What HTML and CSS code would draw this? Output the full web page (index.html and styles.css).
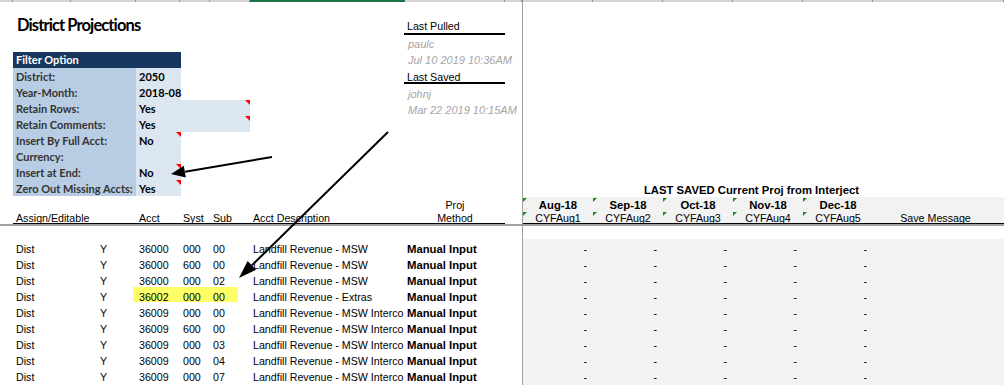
FILE: index.html
```html
<!DOCTYPE html>
<html lang="en">
<head>
<meta charset="utf-8">
<title>District Projections</title>
<link rel="stylesheet" href="styles.css">
</head>
<body>
<div class="sheet">
  <div class="colbar">
    <span></span><span></span><span></span><span></span><span></span><span></span>
    <span class="sel"></span><span></span><span></span><span></span>
    <span></span><span></span><span></span><span></span><span></span><span></span>
  </div>

  <div class="panes">
    <!-- frozen top-left: title, filter block, pull/save info, column headings -->
    <section class="tl">
      <h1 class="title">District Projections</h1>

      <div class="filter">
        <div class="fhead">Filter Option</div>
        <div class="flabel">District:</div><div class="fval">2050</div>
        <div class="flabel">Year-Month:</div><div class="fval">2018-08</div>
        <div class="flabel">Retain Rows:</div><div class="fval wide note">Yes</div>
        <div class="flabel">Retain Comments:</div><div class="fval wide note">Yes</div>
        <div class="flabel">Insert By Full Acct:</div><div class="fval note">No</div>
        <div class="flabel">Currency:</div><div class="fval"></div>
        <div class="flabel">Insert at End:</div><div class="fval note">No</div>
        <div class="flabel">Zero Out Missing Accts:</div><div class="fval note">Yes</div>
      </div>

      <div class="stamp">
        <div class="st-head">Last Pulled</div>
        <div class="st-val p1">paulc</div>
        <div class="st-val p0">Jul 10 2019 10:36AM</div>
        <div class="st-head second">Last Saved</div>
        <div class="st-val p2">johnj</div>
        <div class="st-val p2">Mar 22 2019 10:15AM</div>
      </div>

      <div class="colheads">
        <span class="c-proj">Proj</span>
        <span>Assign/Editable</span>
        <span></span>
        <span>Acct</span>
        <span>Syst</span>
        <span>Sub</span>
        <span>Acct Description</span>
        <span class="c-method">Method</span>
      </div>
    </section>

    <div class="vsplit"></div>

    <!-- frozen top-right: saved projection headings -->
    <section class="tr">
      <div class="saved-title">LAST SAVED Current Proj from Interject</div>
      <div class="mhead">
        <span class="flag mon">Aug-18</span>
        <span class="flag mon">Sep-18</span>
        <span class="flag mon">Oct-18</span>
        <span class="flag mon">Nov-18</span>
        <span class="flag mon">Dec-18</span>
        <span></span>
        <span class="flag key">CYFAug1</span>
        <span class="flag key">CYFAug2</span>
        <span class="flag key">CYFAug3</span>
        <span class="flag key">CYFAug4</span>
        <span class="flag key">CYFAug5</span>
        <span class="key msg">Save Message</span>
      </div>
    </section>

    <div class="hsplit"></div>

    <!-- account rows -->
    <section class="bl">
      <div class="drow"><span>Dist</span><span class="ctr">Y</span><span>36000</span><span>000</span><span>00</span><span class="desc">Landfill Revenue - MSW</span><span class="meth">Manual Input</span><span></span></div>
      <div class="drow"><span>Dist</span><span class="ctr">Y</span><span>36000</span><span>600</span><span>00</span><span class="desc">Landfill Revenue - MSW</span><span class="meth">Manual Input</span><span></span></div>
      <div class="drow"><span>Dist</span><span class="ctr">Y</span><span>36000</span><span>000</span><span>02</span><span class="desc">Landfill Revenue - MSW</span><span class="meth">Manual Input</span><span></span></div>
      <div class="drow hl"><i class="mark"></i><span>Dist</span><span class="ctr">Y</span><span>36002</span><span>000</span><span>00</span><span class="desc">Landfill Revenue - Extras</span><span class="meth">Manual Input</span><span></span></div>
      <div class="drow"><span>Dist</span><span class="ctr">Y</span><span>36009</span><span>000</span><span>00</span><span class="desc">Landfill Revenue - MSW Interco</span><span class="meth">Manual Input</span><span></span></div>
      <div class="drow"><span>Dist</span><span class="ctr">Y</span><span>36009</span><span>600</span><span>00</span><span class="desc">Landfill Revenue - MSW Interco</span><span class="meth">Manual Input</span><span></span></div>
      <div class="drow"><span>Dist</span><span class="ctr">Y</span><span>36009</span><span>000</span><span>03</span><span class="desc">Landfill Revenue - MSW Interco</span><span class="meth">Manual Input</span><span></span></div>
      <div class="drow"><span>Dist</span><span class="ctr">Y</span><span>36009</span><span>000</span><span>04</span><span class="desc">Landfill Revenue - MSW Interco</span><span class="meth">Manual Input</span><span></span></div>
      <div class="drow"><span>Dist</span><span class="ctr">Y</span><span>36009</span><span>000</span><span>07</span><span class="desc">Landfill Revenue - MSW Interco</span><span class="meth">Manual Input</span><span></span></div>
    </section>

    <section class="br">
      <div class="vals">
        <div class="vrow"><span>-</span><span>-</span><span>-</span><span>-</span><span>-</span><span></span></div>
        <div class="vrow"><span>-</span><span>-</span><span>-</span><span>-</span><span>-</span><span></span></div>
        <div class="vrow"><span>-</span><span>-</span><span>-</span><span>-</span><span>-</span><span></span></div>
        <div class="vrow"><span>-</span><span>-</span><span>-</span><span>-</span><span>-</span><span></span></div>
        <div class="vrow"><span>-</span><span>-</span><span>-</span><span>-</span><span>-</span><span></span></div>
        <div class="vrow"><span>-</span><span>-</span><span>-</span><span>-</span><span>-</span><span></span></div>
        <div class="vrow"><span>-</span><span>-</span><span>-</span><span>-</span><span>-</span><span></span></div>
        <div class="vrow"><span>-</span><span>-</span><span>-</span><span>-</span><span>-</span><span></span></div>
        <div class="vrow"><span>-</span><span>-</span><span>-</span><span>-</span><span>-</span><span></span></div>
      </div>
    </section>
  </div>

  <!-- callout arrows drawn over the sheet -->
  <svg class="callouts" width="1004" height="385" viewBox="0 0 1004 385" aria-hidden="true">
    <line x1="272" y1="157" x2="185" y2="171.7" stroke="#000" stroke-width="2"/>
    <polygon points="171,174 185.8,177.6 183.8,165.8" fill="#000"/>
    <line x1="388" y1="132" x2="251.8" y2="265.4" stroke="#000" stroke-width="2"/>
    <polygon points="239,278 256,269.7 247.6,261.1" fill="#000"/>
  </svg>
</div>
</body>
</html>
```

FILE: styles.css
```css
:root {
  --lcols: 13px 58px 65px 44px 30px 40px 155px 100px 17px;
  --rcols: 70px 70px 70px 70px 70px 1fr;
  --toprows: 16px 17px 17px 16px repeat(8, 16px) 14px 14px;
}

* { box-sizing: border-box; }

body {
  margin: 0;
  background: #fff;
  font-family: "Liberation Sans", Arial, sans-serif;
  font-size: 10.67px;
  color: #000;
}

.sheet {
  position: relative;
  width: 1004px;
  height: 385px;
  overflow: hidden;
}

/* column header edge */
.colbar {
  display: grid;
  grid-template-columns: var(--lcols) 1px 70px 70px 70px 70px 70px 1fr;
  height: 2px;
  background: #d4d4d4;
}
.colbar span { border-right: 1px solid #979797; }
.colbar .sel { background: #217346; border-right: none; }

.panes {
  display: grid;
  grid-template-columns: 522px 1px 1fr;
  grid-template-rows: 222px 2px 1fr;
  height: 383px;
}

.vsplit { grid-column: 2; grid-row: 1 / 4; background: #a0a0a0; }
.hsplit { grid-column: 1 / 4; grid-row: 2; background: #a0a0a0; }

/* ---------- top-left ---------- */
.tl {
  grid-column: 1;
  grid-row: 1;
  display: grid;
  grid-template-columns: var(--lcols);
  grid-template-rows: var(--toprows);
}

.title {
  grid-column: 2 / 8;
  grid-row: 1 / 3;
  margin: 0;
  padding: 12px 0 0 4px;
  font-family: Lato, "Open Sans", sans-serif;
  font-weight: 700;
  font-size: 16.5px;
  letter-spacing: -0.9px;
  line-height: 22px;
  color: #000;
  white-space: nowrap;
  min-width: 0;
}

.filter {
  grid-column: 2 / 7;
  grid-row: 4 / 13;
  display: grid;
  grid-template-columns: 123px 45px 69px;
  grid-template-rows: repeat(9, 16px);
  font-family: Lato, "Open Sans", sans-serif;
  font-weight: 700;
  font-size: 11px;
  line-height: 16px;
}
.fhead {
  grid-column: 1 / 3;
  background: #17375e;
  color: #fff;
  padding-left: 3px;
}
.flabel {
  grid-column: 1;
  background: #b8cce4;
  color: #333;
  padding: 1px 0 0 3px;
  white-space: nowrap;
}
.fval {
  position: relative;
  background: #dce6f1;
  color: #000;
  padding: 1px 0 0 3px;
  white-space: nowrap;
}
.fval.wide { grid-column: 2 / 4; }
.note::after {
  content: "";
  position: absolute;
  top: 0;
  right: 0;
  border-top: 5px solid #f00;
  border-left: 5px solid transparent;
}

.stamp {
  grid-column: 8;
  grid-row: 2 / 8;
  min-width: 0;
  display: grid;
  grid-template-rows: 17px 17px 16px 16px 16px 16px;
  grid-template-columns: 100px;
  line-height: 16px;
  white-space: nowrap;
}
.st-head {
  min-width: 0;
  border-bottom: 2px solid #000;
  margin-left: -1px;
  padding-left: 3px;
}
.st-head.second { padding-top: 1px; }
.st-val {
  min-width: 0;
  font-style: italic;
  font-size: 11px;
  color: #a6a6a6;
  padding-left: 3px;
}
.st-val.p0 { padding-top: 0; }
.st-val.p1 { padding-top: 1px; }
.st-val.p2 { padding-top: 2px; }

.colheads {
  grid-column: 2 / 9;
  grid-row: 13 / 15;
  display: grid;
  grid-template-columns: 58px 65px 44px 30px 40px 155px 100px;
  grid-template-rows: 14px 14px;
  border-bottom: 1px solid #000;
  line-height: 14px;
}
.colheads > span {
  grid-row: 2;
  padding: 1px 0 0 3px;
  white-space: nowrap;
}
.colheads > .c-proj {
  grid-row: 1;
  grid-column: 7;
  padding: 2px 0 0;
  text-align: center;
}
.colheads > .c-method { padding-left: 0; text-align: center; }

/* ---------- top-right ---------- */
.tr {
  grid-column: 3;
  grid-row: 1;
  display: grid;
  grid-template-columns: var(--rcols);
  grid-template-rows: var(--toprows);
}
.saved-title {
  grid-column: 1 / -1;
  grid-row: 12;
  padding: 2px 24px 0 0;
  line-height: 16px;
  font-weight: 700;
  font-size: 11.3px;
  text-align: center;
  white-space: nowrap;
}
.mhead {
  grid-column: 1 / -1;
  grid-row: 13 / 15;
  display: grid;
  grid-template-columns: var(--rcols);
  grid-template-rows: 14px 13px;
  margin-top: 1px;
  background: #f2f2f2;
  border-bottom: 1px solid #000;
  line-height: 14px;
  text-align: center;
  white-space: nowrap;
}
.mhead .mon { font-weight: 700; font-size: 11.3px; padding-top: 1px; }
.mhead .key { padding-top: 0; }
.mhead .msg { padding-right: 6px; }
.flag { position: relative; }
.flag::before {
  content: "";
  position: absolute;
  top: 1px;
  left: 0;
  border-top: 4px solid #1d8a1d;
  border-right: 4px solid transparent;
}

/* ---------- account rows ---------- */
.bl {
  grid-column: 1;
  grid-row: 3;
  padding-top: 13px;
}
.drow {
  position: relative;
  display: grid;
  grid-template-columns: var(--lcols);
  height: 16px;
}
.drow > span:first-of-type { grid-column: 2; }
.drow > span {
  position: relative;
  min-width: 0;
  padding: 2px 0 0 3px;
  line-height: 17px;
  white-space: nowrap;
}
.drow > .ctr { padding-left: 0; text-align: center; }
.drow > .desc { overflow: hidden; }
.drow > .meth { font-weight: 700; font-size: 11.3px; padding-left: 2px; }
.mark {
  position: absolute;
  left: 133px;
  top: 0;
  width: 105px;
  height: 15px;
  background: #ffff66;
}

.br {
  grid-column: 3;
  grid-row: 3;
  padding-top: 13px;
  display: flex;
  flex-direction: column;
}
.vals {
  flex: 1;
  background: #f2f2f2;
}
.vrow {
  display: grid;
  grid-template-columns: var(--rcols);
  height: 16px;
}
.vrow > span {
  padding: 2px 6px 0 0;
  line-height: 17px;
  text-align: right;
}

.callouts {
  position: absolute;
  left: 0;
  top: 0;
  pointer-events: none;
}
```
